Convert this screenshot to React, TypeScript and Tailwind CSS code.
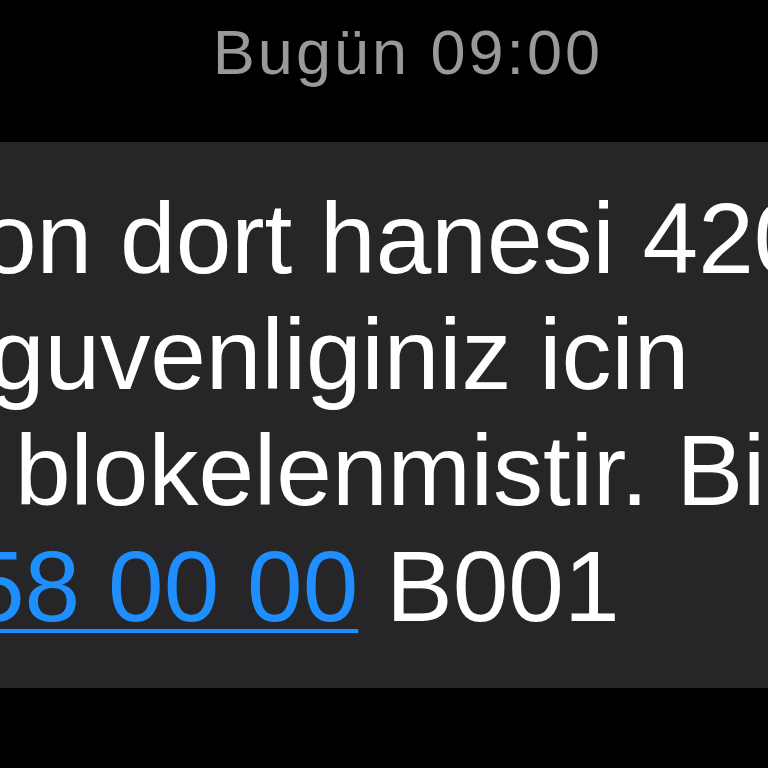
export default function App() {
    // message lines, each starts at its own offset because the bubble is cropped on the left
    const font = { fontFamily: '"Liberation Sans", Arial, sans-serif' };

    return (
        <div className="w-[768px] h-[768px] overflow-hidden bg-black" style={font}>
            {/* Timestamp */}
            <div className="h-[142px] pl-[48px] pt-[21px] flex justify-center">
                <span className="text-[63px] leading-none text-[#98989d] tracking-[3px]">Bugün 09:00</span>
            </div>

            {/* Message bubble */}
            <div className="bg-[#262629] pt-[38px] pb-[44px] text-white text-[100px] leading-[116px] whitespace-nowrap">
                <div className="ml-[-69px]">son dort hanesi 4206</div>
                <div className="ml-[-11px]">guvenliginiz icin</div>
                <div className="ml-[15px]">blokelenmistir. Bilgi</div>
                <div className="ml-[-31px]">
                    <span className="text-[#1f8fff] underline decoration-4 underline-offset-8">58 00 00</span> B001
                </div>
            </div>
        </div>
    );
}
